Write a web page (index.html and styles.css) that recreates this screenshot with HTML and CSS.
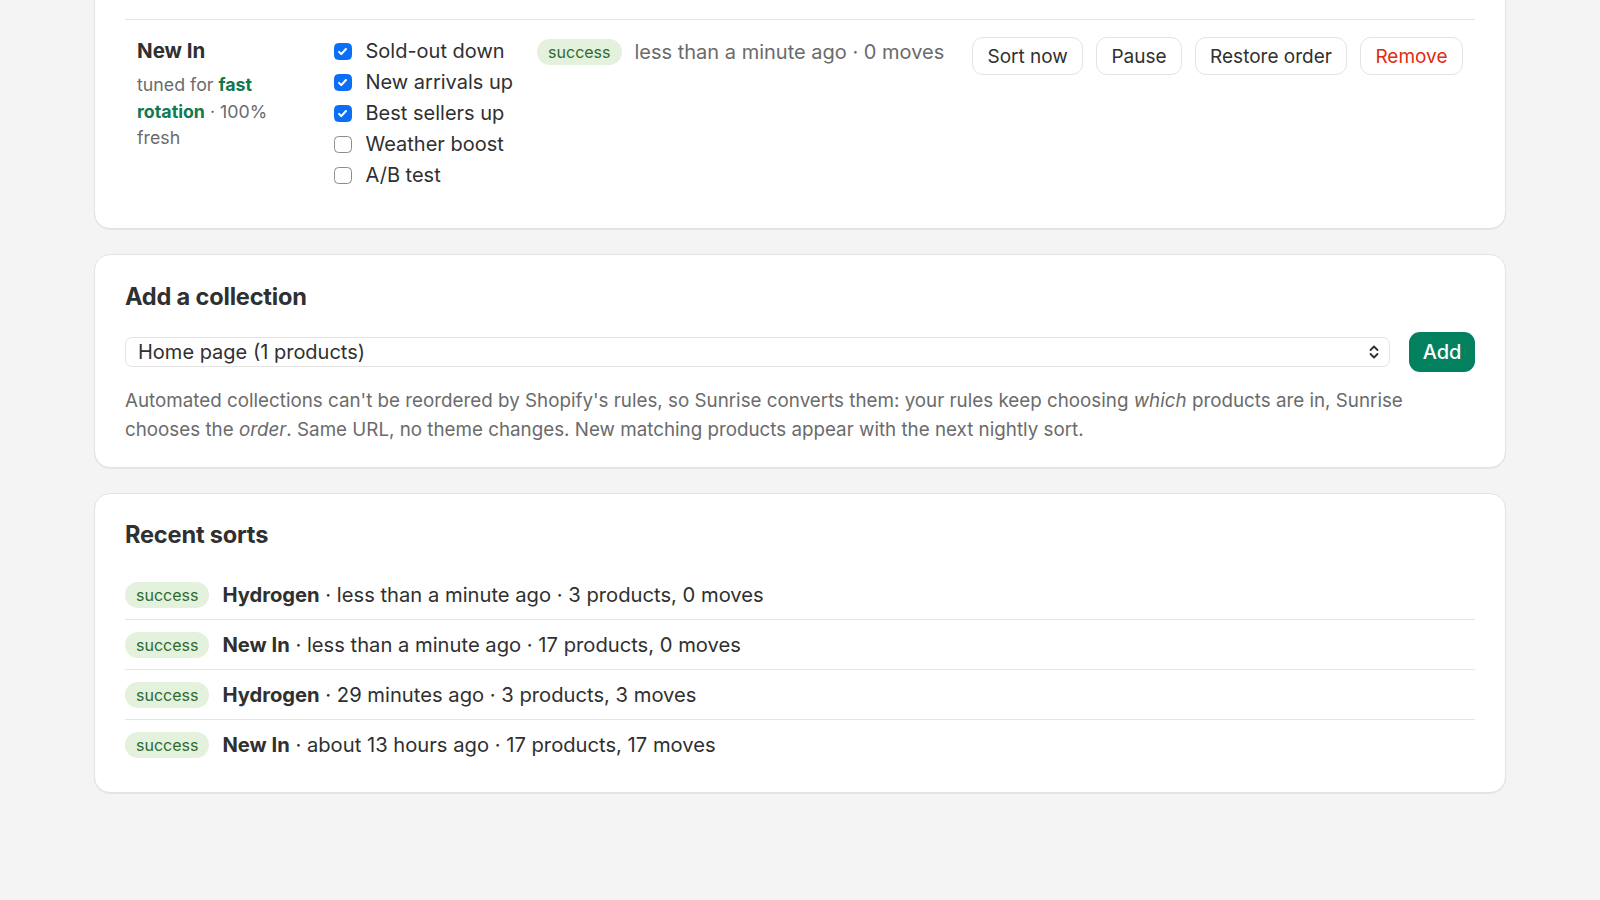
FILE: index.html
```html
<!DOCTYPE html>
<html lang="en">
<head>
  <meta charset="UTF-8" />
  <meta name="viewport" content="width=device-width, initial-scale=1.0"/>
  <title>Sunrise – Collections</title>
  <link rel="stylesheet" href="styles.css">
</head>
<body>

  <main class="page">

    <section class="card card-collections">
      <div class="row-prev"></div>

      <div class="collection-row">
        <div class="col-title">
          <div class="col-name">New In</div>
          <div class="col-tuned">tuned for <b>fast</b> <b>rotation</b> · 100% fresh</div>
        </div>

        <ul class="rules">
          <li><span class="check on"><svg viewBox="0 0 16 16"><path d="M4.3 8.4l2.4 2.4 5-5.4"/></svg></span>Sold-out down</li>
          <li><span class="check on"><svg viewBox="0 0 16 16"><path d="M4.3 8.4l2.4 2.4 5-5.4"/></svg></span>New arrivals up</li>
          <li><span class="check on"><svg viewBox="0 0 16 16"><path d="M4.3 8.4l2.4 2.4 5-5.4"/></svg></span>Best sellers up</li>
          <li><span class="check"></span>Weather boost</li>
          <li><span class="check"></span>A/B test</li>
        </ul>

        <div class="status">
          <span class="badge">success</span>
          <span class="meta">less than a minute ago · 0 moves</span>
        </div>

        <div class="actions">
          <button class="btn">Sort now</button>
          <button class="btn">Pause</button>
          <button class="btn">Restore order</button>
          <button class="btn btn-danger">Remove</button>
        </div>
      </div>
    </section>

    <section class="card card-add">
      <h2>Add a collection</h2>
      <div class="add-row">
        <div class="select">
          <span>Home page (1 products)</span>
          <svg class="chevrons" viewBox="0 0 12 18"><path d="M2.5 7l3.5-3.5 3.5 3.5M2.5 11l3.5 3.5 3.5-3.5"/></svg>
        </div>
        <button class="btn-primary">Add</button>
      </div>
      <p class="help">Automated collections can't be reordered by Shopify's rules, so Sunrise converts them: your rules keep choosing <em>which</em> products are in, Sunrise chooses the <em>order</em>. Same URL, no theme changes. New matching products appear with the next nightly sort.</p>
    </section>

    <section class="card card-sorts">
      <h2>Recent sorts</h2>
      <ul class="sorts">
        <li><span class="badge">success</span><span><b>Hydrogen</b> · less than a minute ago · 3 products, 0 moves</span></li>
        <li><span class="badge">success</span><span><b>New In</b> · less than a minute ago · 17 products, 0 moves</span></li>
        <li><span class="badge">success</span><span><b>Hydrogen</b> · 29 minutes ago · 3 products, 3 moves</span></li>
        <li><span class="badge">success</span><span><b>New In</b> · about 13 hours ago · 17 products, 17 moves</span></li>
      </ul>
    </section>

  </main>

</body>
</html>
```

FILE: styles.css
```css
* {
  box-sizing: border-box;
}

body {
  margin: 0;
  padding: 0;
  font-family: Inter, 'Noto Sans', sans-serif;
  font-size: 20px;
  color: #303030;
  background-color: #f4f4f4;
}

.page {
  width: 1412px;
  margin: 0 auto;
  padding-bottom: 60px;
  display: flex;
  flex-direction: column;
  gap: 25px;
}

.card {
  background: #fff;
  border: 1px solid #e3e3e3;
  border-radius: 16px;
  box-shadow: 0 1px 0 rgba(0, 0, 0, 0.06);
  padding: 27px 30px 23px;
}

.card-collections {
  margin-top: -60px;
  padding-top: 28px;
  padding-bottom: 20px;
}

.card-sorts {
  padding-top: 26px;
}

.row-prev {
  height: 50px;
}

h2 {
  font-size: 23.6px;
  line-height: 30px;
  font-weight: 700;
  margin: 0;
  letter-spacing: -0.2px;
}

/* collection row */

.collection-row {
  display: flex;
  align-items: flex-start;
  padding: 16px 12px 17px;
  border-top: 1.5px solid #e6e6e6;
}

.col-title {
  width: 160px;
  margin-right: 36px;
}

.col-name {
  font-size: 20.5px;
  font-weight: 650;
  line-height: 30px;
}

.col-tuned {
  margin-top: 6px;
  font-size: 17.8px;
  line-height: 26.5px;
  color: #6b6b6b;
}

.col-tuned b {
  color: #0f7a50;
  font-weight: 700;
}

.rules {
  list-style: none;
  margin: 0;
  padding: 0;
}

.rules li {
  display: flex;
  align-items: center;
  line-height: 31px;
  height: 31px;
}

.check {
  width: 17.5px;
  height: 17.5px;
  border-radius: 4.5px;
  border: 1.5px solid #8c8c8c;
  margin-right: 14px;
  margin-left: 1px;
  display: inline-flex;
  align-items: center;
  justify-content: center;
  background: #fff;
}

.check.on {
  background: #0b6ef7;
  border-color: #0b6ef7;
}

.check svg {
  width: 15px;
  height: 15px;
  fill: none;
  stroke: #fff;
  stroke-width: 2.2;
  stroke-linecap: round;
  stroke-linejoin: round;
}

.status {
  display: flex;
  align-items: center;
  height: 31px;
  margin-left: 24px;
  gap: 13px;
}

.badge {
  display: inline-block;
  background: #e3f1dd;
  color: #2f6b30;
  font-size: 16px;
  line-height: 26px;
  height: 26px;
  padding: 0 11px;
  border-radius: 13px;
  flex-shrink: 0;
}

.meta {
  color: #6b6b6b;
}

.actions {
  margin-left: auto;
  display: flex;
  gap: 12.5px;
  padding-top: 1px;
}

.btn {
  font-family: inherit;
  font-size: 19px;
  color: #303030;
  background: #fff;
  border: 1.5px solid #e3e3e3;
  border-radius: 11px;
  height: 38px;
  padding: 0 14.5px;
  cursor: pointer;
}

.btn-danger {
  color: #e22c10;
}

/* add a collection */

.add-row {
  display: flex;
  align-items: center;
  gap: 19px;
  margin-top: 20px;
}

.select {
  flex: 1;
  height: 30px;
  border: 1.5px solid #e3e3e3;
  border-radius: 7px;
  display: flex;
  align-items: center;
  justify-content: space-between;
  padding: 0 9px 0 12px;
  font-size: 20px;
}

.chevrons {
  width: 12px;
  height: 18px;
  fill: none;
  stroke: #303030;
  stroke-width: 1.8;
  stroke-linecap: round;
  stroke-linejoin: round;
}

.btn-primary {
  font-family: inherit;
  font-size: 20px;
  font-weight: 500;
  color: #fff;
  background: #03805d;
  border: none;
  border-radius: 11px;
  height: 40px;
  width: 66px;
  cursor: pointer;
}

.help {
  margin: 15px 0 0;
  font-size: 18.8px;
  line-height: 28.5px;
  color: #6b6b6b;
}

/* recent sorts */

.sorts {
  list-style: none;
  margin: 20px 0 0;
  padding: 0;
}

.sorts li {
  display: flex;
  align-items: center;
  gap: 13px;
  height: 50px;
  font-size: 20.2px;
  border-bottom: 1.5px solid #e6e6e6;
}

.sorts li:last-child {
  border-bottom: none;
  height: 49px;
}

.sorts b {
  font-weight: 650;
}
```
